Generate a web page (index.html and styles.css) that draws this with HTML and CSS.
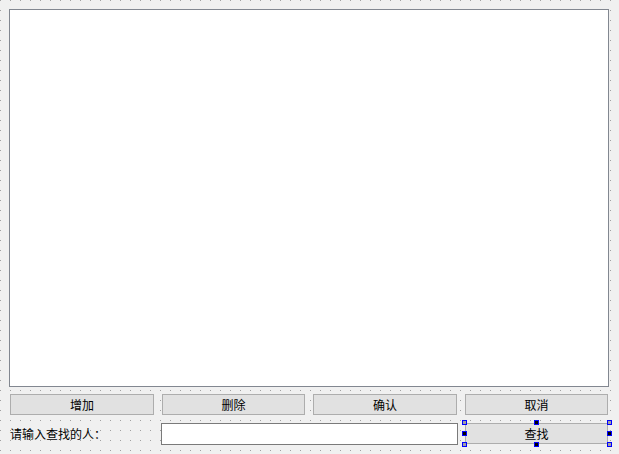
FILE: index.html
```html
<!DOCTYPE html>
<html>
    <head>
        <meta charset="utf-8">
        <title>Form</title>
        <link rel="stylesheet" href="styles.css">
    </head>
    <body>
        <div class="form">
            <div class="table"></div>
            <div class="controls">
                <button class="btn">增加</button>
                <button class="btn">删除</button>
                <button class="btn">确认</button>
                <button class="btn">取消</button>
                <label class="label">请输入查找的人：</label>
                <input class="edit" type="text">
                <div class="selected">
                    <button class="btn">查找</button>
                    <span class="handle corner tl"></span>
                    <span class="handle mid tc"></span>
                    <span class="handle corner tr"></span>
                    <span class="handle mid ml"></span>
                    <span class="handle mid mr"></span>
                    <span class="handle corner bl"></span>
                    <span class="handle mid bc"></span>
                    <span class="handle corner br"></span>
                </div>
            </div>
        </div>
    </body>
</html>
```
FILE: styles.css
```css
:root {
    --font-main: "Noto Sans CJK SC", "Noto Sans", sans-serif;
    --color-bg: #f0f0f0;
    --color-dot: #a0a0a0;
    --color-btn: #e1e1e1;
    --color-btn-border: #adadad;
    --color-frame: #828790;
    --color-handle: #0000ff;
}
html, body {
    margin: 0;
    height: 100%;
}
body {
    font-family: var(--font-main);
    font-size: 12px;
    color: #000;
    background-color: var(--color-bg);
    background-image:
        linear-gradient(90deg, transparent 1px, var(--color-bg) 1px),
        linear-gradient(180deg, var(--color-dot) 1px, var(--color-bg) 1px);
    background-size: 10px 10px;
}
.form {
    display: flex;
    flex-direction: column;
    padding: 9px 0 0 9px;
}
.table {
    width: 600px;
    height: 378px;
    box-sizing: border-box;
    border: 1px solid var(--color-frame);
    background: #fff;
}
.controls {
    display: grid;
    grid-template-columns: 144px 143px 144px 143px;
    grid-template-rows: 21px 21px;
    column-gap: 8px;
    row-gap: 8px;
    margin: 7px 0 0 1px;
}
.btn {
    font: inherit;
    color: #000;
    margin: 0;
    padding: 0;
    width: 100%;
    height: 21px;
    box-sizing: border-box;
    background: var(--color-btn);
    border: 1px solid var(--color-btn-border);
    line-height: 19px;
}
.label {
    display: flex;
    align-items: center;
    white-space: nowrap;
}
.edit {
    grid-column: 2 / 4;
    margin: 0 -1px;
    height: 22px;
    box-sizing: border-box;
    border: 1px solid #7a7a7a;
    background: #fff;
    padding: 0 3px;
    font: inherit;
}
.selected {
    position: relative;
}
.handle {
    position: absolute;
    width: 5px;
    height: 5px;
    box-sizing: border-box;
    border: 1px solid var(--color-handle);
}
.corner {
    background: #a0a0a0;
}
.mid {
    background: #000;
}
.tl { left: -3px; top: -3px; }
.tc { left: 69px; top: -3px; }
.tr { right: -4px; top: -3px; }
.ml { left: -3px; top: 8px; }
.mr { right: -4px; top: 8px; }
.bl { left: -3px; bottom: -3px; }
.bc { left: 69px; bottom: -3px; }
.br { right: -4px; bottom: -3px; }
```
